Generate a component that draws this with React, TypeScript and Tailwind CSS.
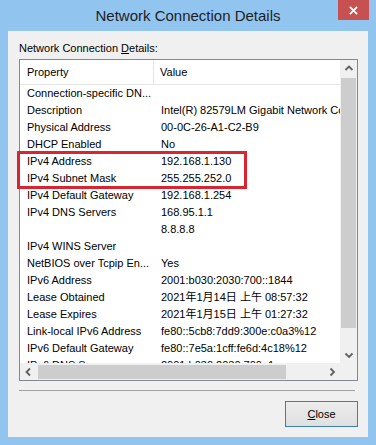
const rows: [string, string][] = [
  ["Connection-specific DN...", ""],
  ["Description", "Intel(R) 82579LM Gigabit Network Connection"],
  ["Physical Address", "00-0C-26-A1-C2-B9"],
  ["DHCP Enabled", "No"],
  ["IPv4 Address", "192.168.1.130"],
  ["IPv4 Subnet Mask", "255.255.252.0"],
  ["IPv4 Default Gateway", "192.168.1.254"],
  ["IPv4 DNS Servers", "168.95.1.1"],
  ["", "8.8.8.8"],
  ["IPv4 WINS Server", ""],
  ["NetBIOS over Tcpip En...", "Yes"],
  ["IPv6 Address", "2001:b030:2030:700::1844"],
  ["Lease Obtained", "2021年1月14日 上午 08:57:32"],
  ["Lease Expires", "2021年1月15日 上午 01:27:32"],
  ["Link-local IPv6 Address", "fe80::5cb8:7dd9:300e:c0a3%12"],
  ["IPv6 Default Gateway", "fe80::7e5a:1cff:fe6d:4c18%12"],
  ["IPv6 DNS Server", "2001:b030:2030:700::1"],
];

function Chevron({ dir }: { dir: "up" | "down" | "left" | "right" }) {
  const d = {
    up: "M1.5 6 5 2.5 8.5 6",
    down: "M1.5 3.5 5 7 8.5 3.5",
    left: "M6 1.5 2.5 5 6 8.5",
    right: "M3.5 1.5 7 5 3.5 8.5",
  }[dir];
  return (
    <svg aria-hidden="true" viewBox="0 0 10 10" className="h-[10px] w-[10px]">
      <path d={d} fill="none" stroke="#606060" strokeWidth="1.8" />
    </svg>
  );
}

export default function App() {
  return (
    <div
      className="flex h-[445px] w-[376px] flex-col bg-[#92c4f0] text-black"
      style={{ fontFamily: '"Liberation Sans", "Noto Sans CJK TC", sans-serif' }}
    >
      {/* title bar */}
      <div className="relative flex h-[31px] shrink-0 items-center justify-center pb-[1px]">
        <span className="text-[15px] leading-none text-[#1e1e1e]">
          Network Connection Details
        </span>
        <button
          type="button"
          aria-label="Close window"
          className="absolute right-[7px] top-0 flex h-[20px] w-[31px] items-center justify-center bg-[#c75050]"
        >
          <svg aria-hidden="true" viewBox="0 0 10 10" className="h-[9px] w-[9px]">
            <path d="M1 1l8 8M9 1 1 9" stroke="#fff" strokeWidth="2" />
          </svg>
        </button>
      </div>

      {/* client area */}
      <div className="mx-[8px] mb-[8px] flex flex-1 flex-col bg-[#f0f0f0] pl-[11px] pr-[10px] pt-[10px] pb-[10px] text-[11px]">
        <p className="mb-[4px] leading-[14px]">
          Network Connection <span className="underline">D</span>etails:
        </p>

        <div className="relative flex flex-col border border-[#828790] bg-white">
          <div className="flex h-[303px]">
            <div className="flex w-[320px] flex-col overflow-hidden">
              <div className="flex h-[25px] shrink-0 items-center border-b border-[#e5e5e5]">
                <div className="flex h-full w-[134px] items-center border-r border-[#e5e5e5] pl-[7px]">
                  Property
                </div>
                <div className="pl-[6px]">Value</div>
              </div>
              {rows.map(([name, value], i) => (
                <div key={i} className="flex h-[17px] shrink-0 items-center whitespace-nowrap">
                  <div className="w-[134px] shrink-0 overflow-hidden pl-[7px]">{name}</div>
                  <div className="min-w-0 flex-1 overflow-hidden pl-[7px]">{value}</div>
                </div>
              ))}
            </div>
            <div className="flex w-[17px] flex-col items-center bg-[#f0f0f0]">
              <div className="flex h-[17px] w-full items-center justify-center">
                <Chevron dir="up" />
              </div>
              <div className="mt-[1px] h-[250px] w-[15px] bg-[#cdcdcd]" />
              <div className="flex-1" />
              <div className="flex h-[17px] w-full items-center justify-center">
                <Chevron dir="down" />
              </div>
            </div>
          </div>
          <div className="flex h-[17px]">
            <div className="flex w-[320px] items-center bg-[#f0f0f0]">
              <div className="flex h-full w-[17px] items-center justify-center">
                <Chevron dir="left" />
              </div>
              <div className="ml-[1px] h-[14px] w-[248px] bg-[#cdcdcd]" />
              <div className="flex-1" />
              <div className="flex h-full w-[17px] items-center justify-center">
                <Chevron dir="right" />
              </div>
            </div>
            <div className="w-[17px] bg-[#f0f0f0]" />
          </div>

          {/* highlight box */}
          <div className="pointer-events-none absolute left-[-3px] top-[91px] h-[38px] w-[230px] border-[3px] border-[#d9252f]" />
        </div>

        <div className="mt-[9px] mr-[3px] h-[1px] bg-[#a0a0a0]" />

        <div className="mt-[10px] flex justify-end">
          <button
            type="button"
            className="h-[26px] w-[73px] border border-[#3c7fb1] bg-gradient-to-b from-[#ececec] to-[#e0e0e0] text-[11px]"
          >
            <span className="underline">C</span>lose
          </button>
        </div>
      </div>
    </div>
  );
}
